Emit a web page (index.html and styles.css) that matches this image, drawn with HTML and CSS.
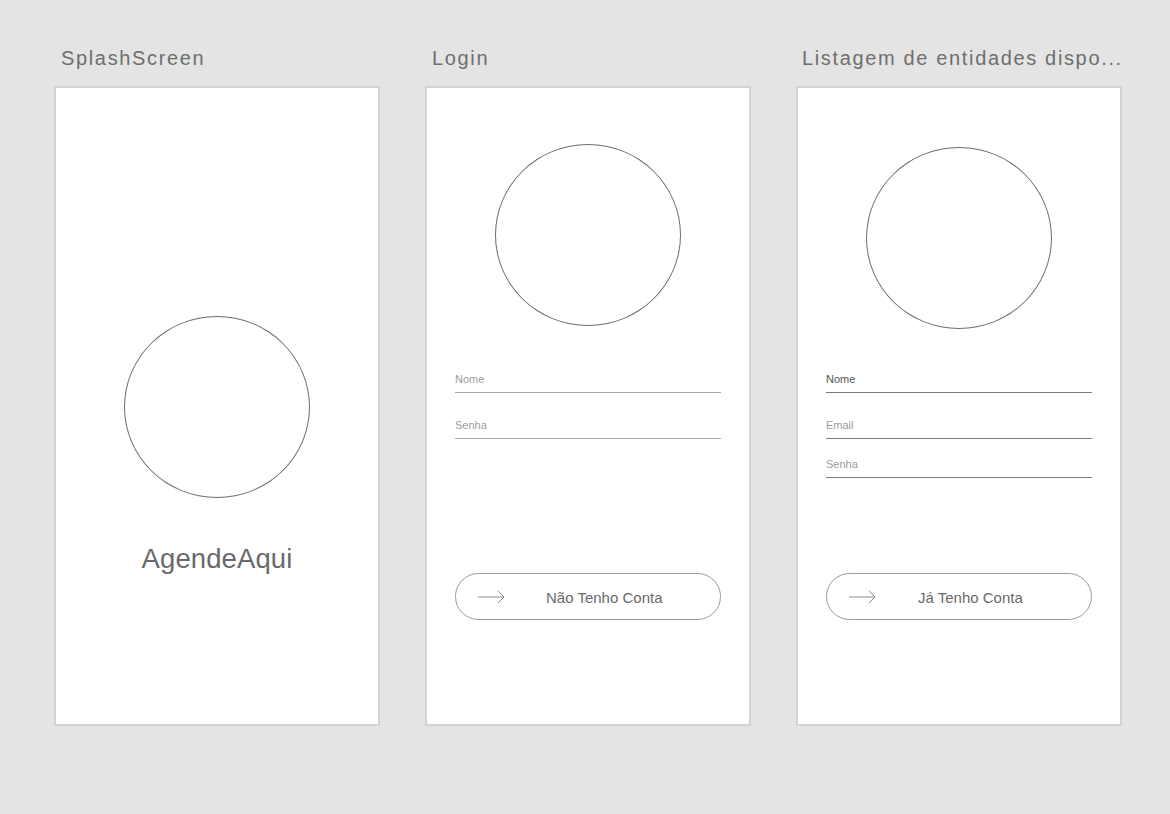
FILE: index.html
```html
<!DOCTYPE html>
<html lang="pt">
<head>
<meta charset="utf-8">
<title>AgendeAqui</title>
<link rel="stylesheet" href="styles.css">
</head>
<body>
<div class="board">
  <section class="col">
    <h2 class="title">SplashScreen</h2>
    <div class="frame splash">
      <div class="logo"></div>
      <div class="brand">AgendeAqui</div>
    </div>
  </section>

  <section class="col">
    <h2 class="title">Login</h2>
    <div class="frame form login">
      <div class="logo"></div>
      <div class="fields">
        <div class="field">Nome</div>
        <div class="field">Senha</div>
      </div>
      <button class="btn">
        <svg class="arrow" width="27" height="14" viewBox="0 0 27 14"><path d="M0 7H26M20 1L26 7L20 13" fill="none" stroke="#8a8a8a" stroke-width="1"/></svg>
        <span>Não Tenho Conta</span>
      </button>
    </div>
  </section>

  <section class="col">
    <h2 class="title">Listagem de entidades dispo...</h2>
    <div class="frame form signup">
      <div class="logo"></div>
      <div class="fields">
        <div class="field strong">Nome</div>
        <div class="field">Email</div>
        <div class="field">Senha</div>
      </div>
      <button class="btn">
        <svg class="arrow" width="27" height="14" viewBox="0 0 27 14"><path d="M0 7H26M20 1L26 7L20 13" fill="none" stroke="#8a8a8a" stroke-width="1"/></svg>
        <span>Já Tenho Conta</span>
      </button>
    </div>
  </section>
</div>
</body>
</html>
```

FILE: styles.css
```css
* { box-sizing: border-box; }
html, body {
  margin: 0;
  padding: 0;
  background: #e4e4e4;
  width: 1170px;
  height: 814px;
  overflow: hidden;
  font-family: "Liberation Sans", Arial, sans-serif;
}
.board {
  display: flex;
  gap: 45px;
  padding: 45px 0 0 54px;
}
.col {
  width: 326px;
  display: flex;
  flex-direction: column;
}
.title {
  margin: 0 0 14px 0;
  padding-left: 7px;
  font-size: 20px;
  font-weight: normal;
  line-height: 27px;
  letter-spacing: 1.65px;
  color: #6e6e6e;
  white-space: nowrap;
}
.col:last-child .title { padding-left: 6px; }
.frame {
  width: 326px;
  height: 640px;
  background: #fff;
  border: 2px solid #d3d3d3;
  display: flex;
  flex-direction: column;
  align-items: center;
}
.logo {
  width: 186px;
  height: 182px;
  border: 1px solid #6e6e6e;
  border-radius: 50%;
  flex-shrink: 0;
}
.splash .logo { margin-top: 228px; }
.brand {
  margin-top: 45px;
  font-size: 27.5px;
  line-height: 32px;
  color: #6a6a6a;
  letter-spacing: 0.1px;
}
.form {
  align-items: stretch;
  padding: 0 28px;
}
.form .logo { align-self: center; }
.login .logo { margin-top: 56px; }
.signup .logo { margin-top: 59px; }
.fields {
  display: flex;
  flex-direction: column;
}
.login .fields { margin-top: 46px; gap: 25px; }
.signup .fields { margin-top: 43px; gap: 18px; }
.field {
  font-size: 11px;
  line-height: 14px;
  color: #9c9c9c;
  padding-bottom: 6px;
  border-bottom: 1px solid #a8a8a8;
}
.signup .field { border-bottom-color: #7a7a7a; }
.signup .field.strong { color: #555; }
.signup .fields .field:nth-child(2) { margin-top: 7px; }
.btn {
  display: flex;
  align-items: center;
  height: 47px;
  border: 1px solid #9a9a9a;
  border-radius: 24px;
  background: #fff;
  padding: 0 0 0 22px;
  font-family: inherit;
  font-size: 15px;
  color: #6a6a6a;
  cursor: pointer;
}
.login .btn { margin-top: 134px; }
.signup .btn { margin-top: 95px; }
.btn .arrow { flex-shrink: 0; margin-top: 1px; }
.btn span { margin-left: 41px; padding-top: 2px; }
.signup .btn span { margin-left: 42px; }
```
